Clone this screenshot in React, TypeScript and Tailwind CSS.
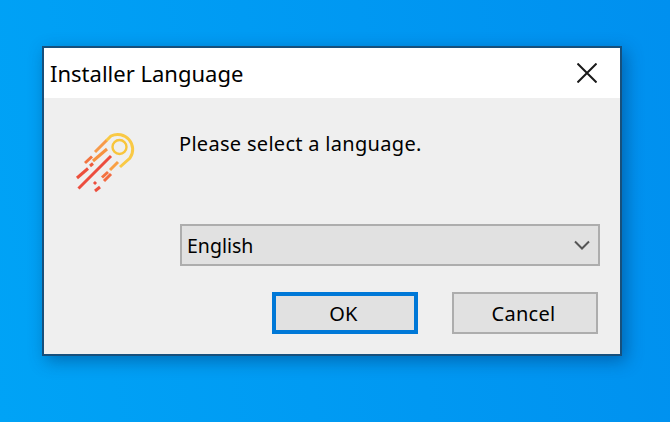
const BARS = [
  { d: "M106.5 140.5 L95 152", c: "#f79a4a" },
  { d: "M92 156.5 L85 163", c: "#f2743f" },
  { d: "M107 149 L93 161", c: "#f6923f" },
  { d: "M93 163.5 L90 166", c: "#ee5a3c" },
  { d: "M88 168.5 L77 178", c: "#ec4f3c" },
  { d: "M111 156 L78.5 188.5", c: "#ec4d3e" },
  { d: "M118 162 L110 170", c: "#f9a044" },
  { d: "M108 172 L102 177.5", c: "#f47240" },
  { d: "M111 174 L104 181", c: "#f26a40" },
  { d: "M96 182 L94 184", c: "#ec4f3e" },
  { d: "M100 187 L95 191", c: "#ec4f3e" },
];

function Logo() {
  return (
    <svg width="100" height="100" viewBox="60 110 100 100" className="block">
      <circle cx="119.5" cy="147" r="7" fill="none" stroke="#f8c53c" strokeWidth="2.4" />
      <path
        d="M106 141 L111 136 A15 15 0 0 1 130 158 L120 167"
        fill="none"
        stroke="#f9c945"
        strokeWidth="3"
      />
      {BARS.map((b) => (
        <path key={b.d} d={b.d} stroke={b.c} strokeWidth="3" fill="none" />
      ))}
    </svg>
  );
}

export default function App() {
  return (
    <div className="w-[670px] h-[422px] overflow-hidden bg-[linear-gradient(80deg,#00a3f6,#0090ef)] pl-[42px] pt-[46px] font-['Noto_Sans','Open_Sans',sans-serif] text-black">
      <div className="w-[580px] h-[310px] border-2 border-[#17507c] bg-[#efefef] flex flex-col shadow-[4px_5px_16px_rgba(0,40,90,0.42)]">
        <div className="h-[50px] bg-white flex items-center justify-between pl-[6px] pr-[23px]">
          <span className="text-[22px] leading-none">Installer Language</span>
          <svg width="20" height="20" viewBox="0 0 20 20" className="shrink-0">
            <path d="M0.5 0.5 L19.5 19.5 M19.5 0.5 L0.5 19.5" stroke="#1a1a1a" strokeWidth="2" fill="none" />
          </svg>
        </div>
        <div className="flex-1 flex">
          <div className="w-[136px] shrink-0 pl-[16px] pt-[12px]">
            <Logo />
          </div>
          <div className="flex-1 flex flex-col pt-[33px]">
            <p className="-ml-[1px] text-[20px] leading-[26px] tracking-[0.3px]">Please select a language.</p>
            <div className="mt-[67px] w-[420px] h-[42px] border-2 border-[#adadad] bg-[#e1e1e1] flex items-center justify-between pl-[5px] pr-[8px] text-[19.5px]">
              <span className="relative top-[1px]">English</span>
              <svg width="16" height="10" viewBox="0 0 16 10">
                <path d="M1 1.5 L8 8.5 L15 1.5" stroke="#555" strokeWidth="2" fill="none" />
              </svg>
            </div>
            <div className="mt-[26px] flex text-[20px] tracking-[0.3px]">
              <button className="ml-[92px] w-[146px] h-[42px] border-4 border-[#0078d7] bg-[#e1e1e1] flex items-center justify-center pr-[3px] pt-[2px]">OK</button>
              <button className="ml-[34px] w-[146px] h-[42px] border-2 border-[#adadad] bg-[#e1e1e1] flex items-center justify-center pr-[3px] pt-[2px]">Cancel</button>
            </div>
          </div>
        </div>
      </div>
    </div>
  );
}
